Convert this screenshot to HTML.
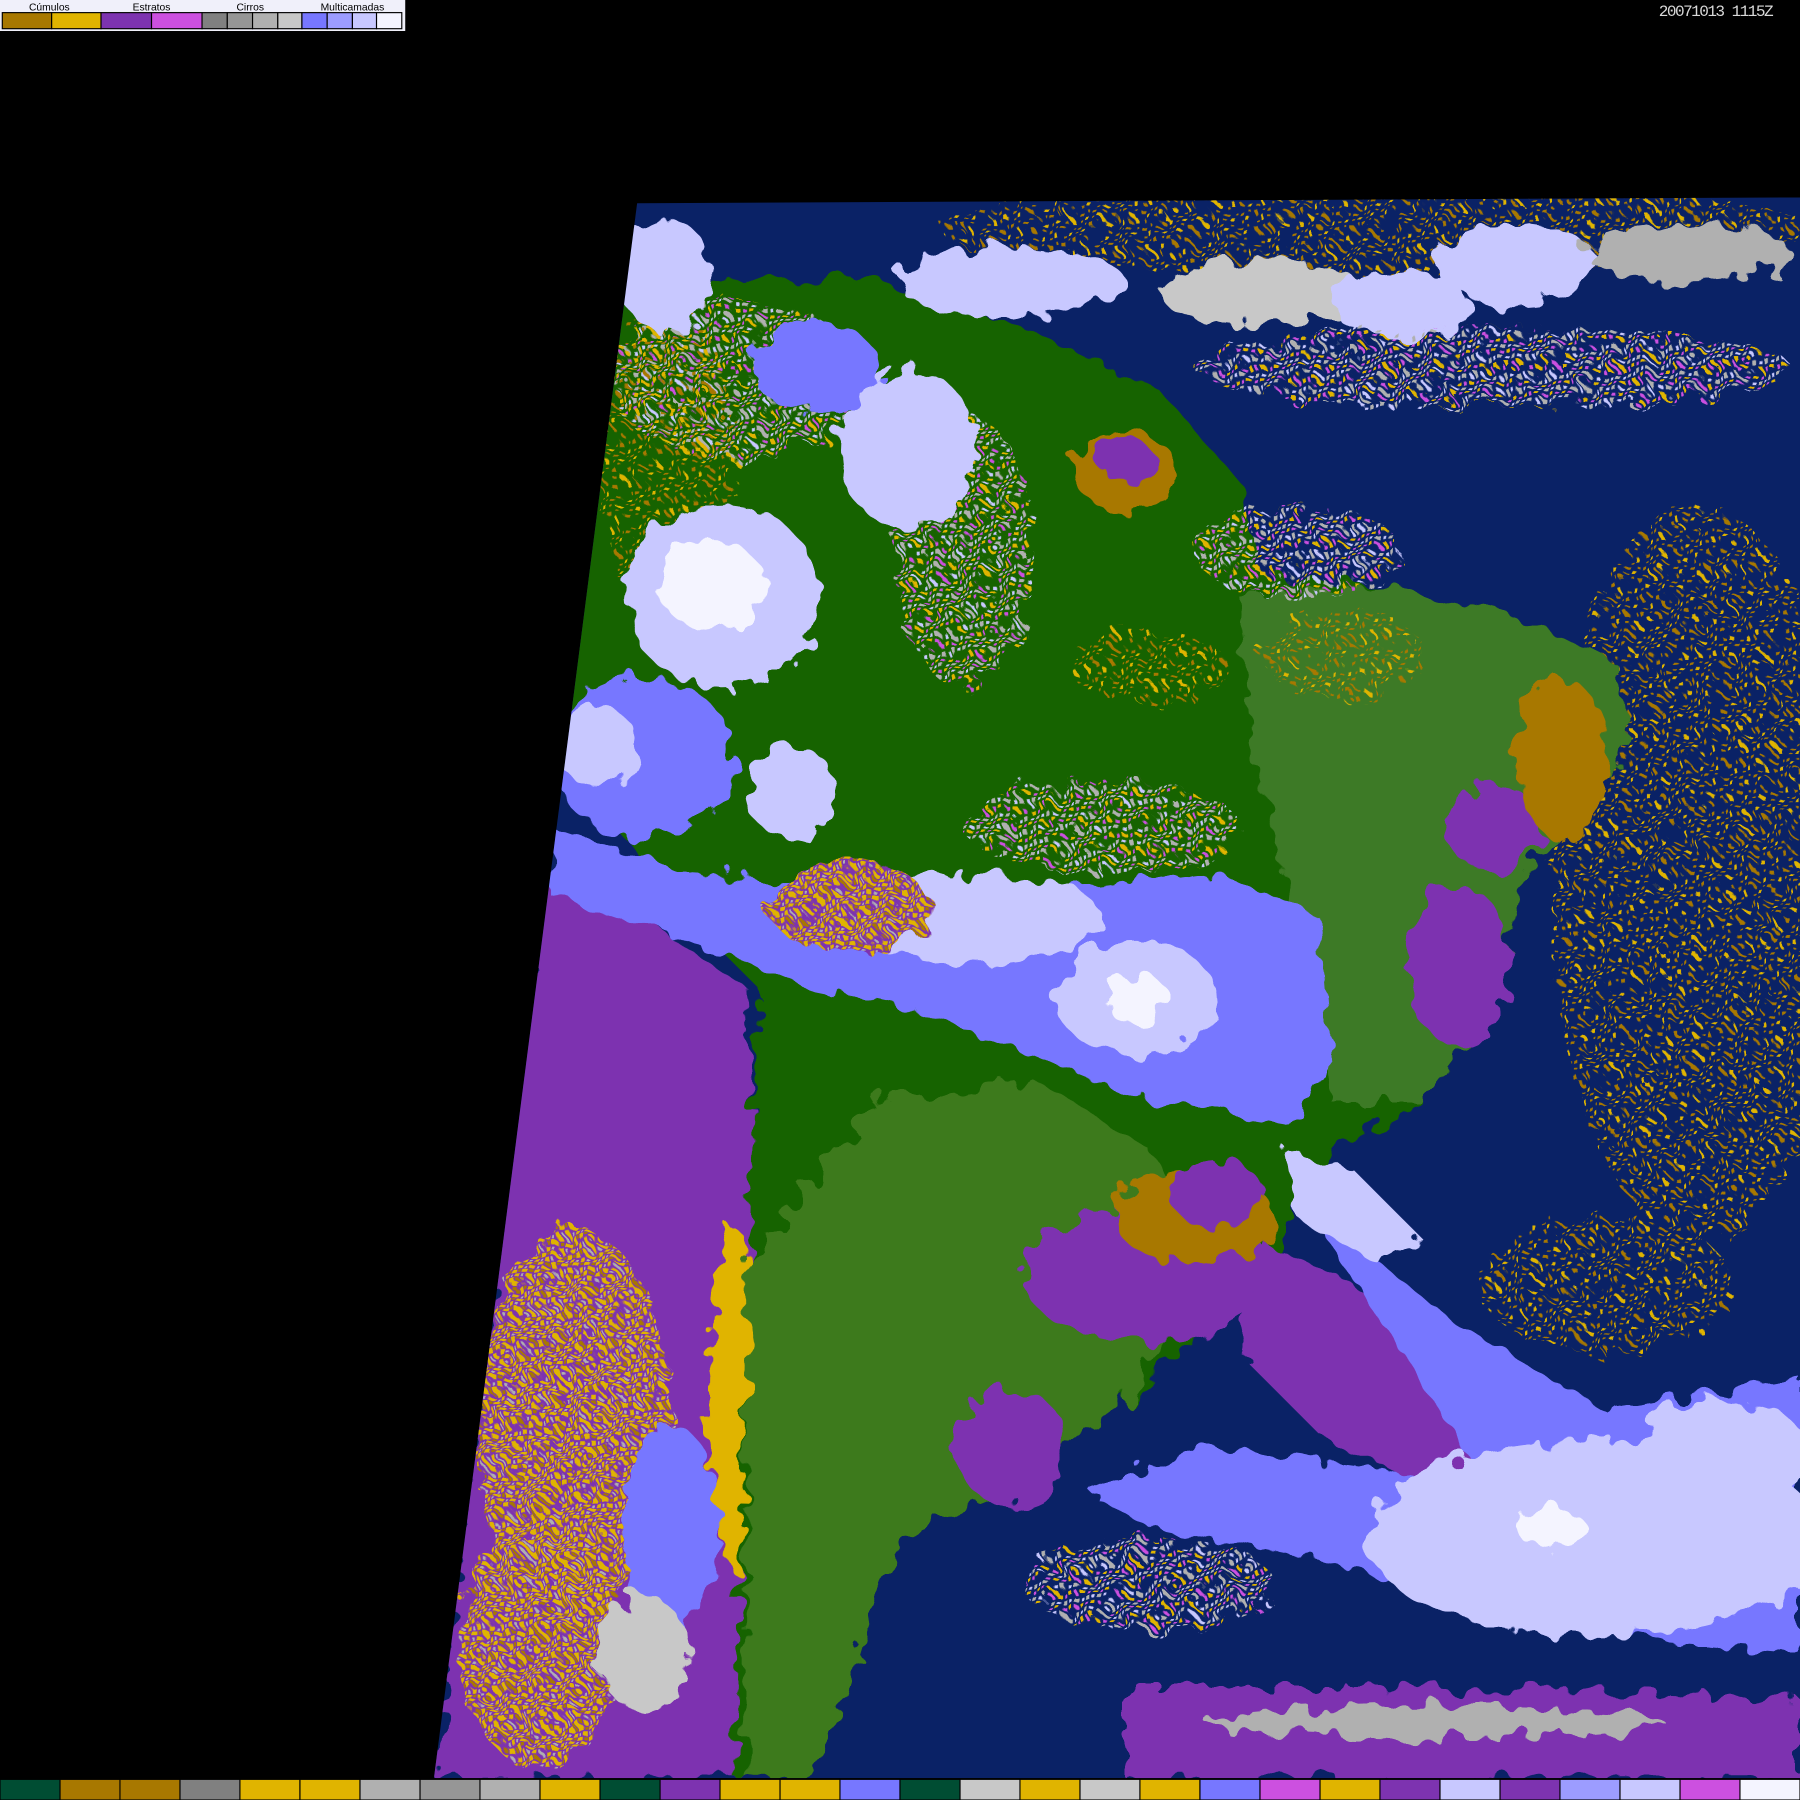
<!DOCTYPE html>
<html><head><meta charset="utf-8"><style>
html,body{margin:0;padding:0;background:#000;width:1800px;height:1800px;overflow:hidden}
svg{display:block}
</style></head><body>
<svg width="1800" height="1800" viewBox="0 0 1568 1568" xmlns="http://www.w3.org/2000/svg">
<defs>
<clipPath id="map"><polygon points="555,177 1568,172 1568,1549 378,1549"/></clipPath>
<filter id="rough" x="-10%" y="-10%" width="120%" height="120%">
<feTurbulence type="fractalNoise" baseFrequency="0.05" numOctaves="2" seed="3" result="n"/>
<feDisplacementMap in="SourceGraphic" in2="n" scale="30"/>
</filter>
<pattern id="spO" width="14" height="14" patternUnits="userSpaceOnUse">
<rect x="1" y="2" width="4" height="3" fill="#a87800"/><rect x="8" y="7" width="3" height="4" fill="#e0b400"/><rect x="10" y="1" width="2" height="2" fill="#a87800"/><rect x="3" y="10" width="3" height="2" fill="#a87800"/>
</pattern>
<pattern id="spY" width="10" height="10" patternUnits="userSpaceOnUse">
<rect x="0" y="0" width="5" height="4" fill="#e0b400"/><rect x="5" y="5" width="4" height="4" fill="#e0b400"/><rect x="6" y="0" width="3" height="3" fill="#a87800"/><rect x="1" y="6" width="2" height="3" fill="#b0b0b0"/>
</pattern>
<pattern id="spG" width="12" height="12" patternUnits="userSpaceOnUse">
<rect x="0" y="0" width="4" height="4" fill="#b0b0b0"/><rect x="6" y="6" width="4" height="3" fill="#e0b400"/><rect x="7" y="1" width="3" height="3" fill="#c8c8ff"/><rect x="1" y="7" width="3" height="3" fill="#cc50e0"/>
</pattern>
</defs>
<rect width="1568" height="1568" fill="#000"/>
<g clip-path="url(#map)">
<rect x="370" y="170" width="1200" height="1380" fill="#0a2266"/>
<g filter="url(#rough)">
<!-- ocean cumulus speckles -->
<ellipse cx="1480" cy="760" rx="130" ry="320" fill="url(#spO)"/>
<ellipse cx="1400" cy="1120" rx="110" ry="60" fill="url(#spO)"/>
<ellipse cx="1200" cy="200" rx="380" ry="40" fill="url(#spO)"/>
<!-- pacific purple -->
<polygon points="378,1549 470,760 560,800 650,860 665,1100 650,1549" fill="#7d33b0"/>
<ellipse cx="500" cy="1240" rx="85" ry="170" fill="url(#spY)"/>
<ellipse cx="470" cy="1430" rx="70" ry="110" fill="url(#spY)"/>
<ellipse cx="640" cy="1220" rx="22" ry="150" fill="#e0b400"/>
<ellipse cx="585" cy="1330" rx="40" ry="90" fill="#7777ff"/>
<ellipse cx="560" cy="1440" rx="40" ry="50" fill="#c8c8c8"/>
<!-- land -->
<polygon points="540,250 760,240 900,290 1010,340 1080,420 1100,500 1200,510 1330,540 1410,580 1420,650 1330,760 1300,880 1240,960 1160,1000 1120,1070 1060,1150 980,1220 900,1290 800,1330 760,1400 730,1500 700,1549 640,1549 650,1200 660,860 600,800 520,700 490,600 500,420" fill="#176300"/>
<polygon points="1080,520 1200,510 1330,540 1410,580 1420,650 1330,760 1300,880 1240,960 1160,960 1130,800 1090,650" fill="#3d7a26"/>
<polygon points="760,960 900,940 1000,1000 1060,1100 980,1220 900,1290 800,1330 760,1400 730,1500 700,1549 650,1549 650,1100" fill="#3e7a1e"/>
<!-- speckled clouds over land -->
<ellipse cx="640" cy="330" rx="110" ry="70" fill="url(#spG)"/>
<ellipse cx="840" cy="480" rx="60" ry="120" fill="url(#spG)"/>
<ellipse cx="580" cy="400" rx="60" ry="140" fill="url(#spO)"/>
<ellipse cx="960" cy="720" rx="120" ry="40" fill="url(#spG)"/>
<ellipse cx="1130" cy="480" rx="90" ry="40" fill="url(#spG)"/>
<!-- ochre/purple patches on land -->
<ellipse cx="980" cy="410" rx="45" ry="35" fill="#a87800"/>
<ellipse cx="980" cy="400" rx="25" ry="18" fill="#7d33b0"/>
<ellipse cx="1000" cy="580" rx="70" ry="30" fill="url(#spO)"/>
<ellipse cx="1170" cy="570" rx="70" ry="40" fill="url(#spO)"/>
<ellipse cx="1300" cy="720" rx="40" ry="40" fill="#7d33b0"/>
<ellipse cx="1270" cy="840" rx="45" ry="70" fill="#7d33b0"/>
<ellipse cx="1360" cy="660" rx="40" ry="70" fill="#a87800"/>
<ellipse cx="1000" cy="1110" rx="110" ry="60" fill="#7d33b0"/>
<ellipse cx="1040" cy="1060" rx="70" ry="40" fill="#a87800"/>
<ellipse cx="880" cy="1260" rx="50" ry="50" fill="#7d33b0"/>
<ellipse cx="1060" cy="1040" rx="40" ry="30" fill="#7d33b0"/>
<!-- atlantic purple band -->
<polygon points="1100,1080 1200,1130 1320,1200 1400,1260 1380,1320 1250,1300 1150,1250 1080,1180" fill="#7d33b0"/>
<!-- north cloud band -->
<ellipse cx="880" cy="245" rx="100" ry="30" fill="#c8c8ff"/>
<ellipse cx="1100" cy="255" rx="90" ry="28" fill="#c8c8c8"/>
<ellipse cx="1220" cy="265" rx="60" ry="30" fill="#c8c8ff"/>
<ellipse cx="1320" cy="230" rx="70" ry="35" fill="#c8c8ff"/>
<ellipse cx="1470" cy="220" rx="90" ry="25" fill="#b0b0b0"/>
<ellipse cx="1300" cy="320" rx="260" ry="35" fill="url(#spG)"/>
<ellipse cx="580" cy="240" rx="40" ry="50" fill="#c8c8ff"/>
<!-- amazon clouds -->
<ellipse cx="710" cy="320" rx="55" ry="40" fill="#7777ff"/>
<ellipse cx="790" cy="390" rx="60" ry="70" fill="#c8c8ff"/>
<ellipse cx="630" cy="520" rx="85" ry="80" fill="#c8c8ff"/>
<ellipse cx="620" cy="510" rx="45" ry="40" fill="#f4f4ff"/>
<ellipse cx="560" cy="660" rx="80" ry="70" fill="#7777ff"/>
<ellipse cx="520" cy="650" rx="35" ry="35" fill="#c8c8ff"/>
<ellipse cx="690" cy="690" rx="40" ry="40" fill="#c8c8ff"/>
<!-- big diagonal band -->
<polygon points="480,720 600,760 760,770 900,780 1060,760 1150,800 1160,920 1120,980 1000,960 900,920 800,880 700,860 600,820 480,780" fill="#7777ff"/>
<ellipse cx="850" cy="800" rx="110" ry="40" fill="#c8c8ff"/>
<ellipse cx="990" cy="870" rx="70" ry="50" fill="#c8c8ff"/>
<ellipse cx="990" cy="870" rx="28" ry="22" fill="#f4f4ff"/>
<ellipse cx="740" cy="790" rx="70" ry="40" fill="#7d33b0"/>
<ellipse cx="740" cy="790" rx="70" ry="40" fill="url(#spY)"/>
<!-- south atlantic storm -->
<polygon points="1130,1040 1250,1140 1400,1230 1568,1200 1568,1440 1450,1430 1300,1400 1150,1360 1000,1330 950,1300 1050,1260 1200,1280 1300,1300" fill="#7777ff"/>
<ellipse cx="1390" cy="1340" rx="200" ry="85" fill="#c8c8ff"/>
<ellipse cx="1500" cy="1270" rx="80" ry="50" fill="#c8c8ff"/>
<ellipse cx="1350" cy="1330" rx="30" ry="18" fill="#f4f4ff"/>
<polygon points="1120,1000 1180,1020 1240,1080 1200,1100 1130,1060" fill="#c8c8ff"/>
<ellipse cx="1000" cy="1380" rx="110" ry="40" fill="url(#spG)"/>
<!-- south purple strip -->
<polygon points="980,1470 1200,1470 1568,1480 1568,1549 980,1549" fill="#7d33b0"/>
<ellipse cx="1250" cy="1500" rx="200" ry="15" fill="#b0b0b0"/>
</g>
</g>
<!-- legend -->
<rect x="0" y="0" width="353" height="27" fill="#f0f0fa"/>
<g font-family="Liberation Sans, sans-serif" font-size="9" fill="#000" text-anchor="middle">
<text x="43" y="9">Cúmulos</text><text x="132" y="9">Estratos</text><text x="218" y="9">Cirros</text><text x="307" y="9">Multicamadas</text>
</g>
<g stroke="#000" stroke-width="1">
<rect x="2" y="11" width="43" height="14" fill="#a87800"/>
<rect x="45" y="11" width="43" height="14" fill="#e0b400"/>
<rect x="88" y="11" width="44" height="14" fill="#7d33b0"/>
<rect x="132" y="11" width="44" height="14" fill="#cc50e0"/>
<rect x="176" y="11" width="22" height="14" fill="#808080"/>
<rect x="198" y="11" width="22" height="14" fill="#969696"/>
<rect x="220" y="11" width="22" height="14" fill="#b0b0b0"/>
<rect x="242" y="11" width="21" height="14" fill="#c8c8c8"/>
<rect x="263" y="11" width="22" height="14" fill="#7777ff"/>
<rect x="285" y="11" width="22" height="14" fill="#9c9cff"/>
<rect x="307" y="11" width="21" height="14" fill="#c8c8ff"/>
<rect x="328" y="11" width="22" height="14" fill="#f4f4ff"/>
</g>
<text x="1545" y="14" font-family="Liberation Mono, monospace" font-size="14" fill="#d8d8d8" text-anchor="end" textLength="100">20071013 1115Z</text>
<!-- bottom bar -->
<rect x="0" y="1549" width="1568" height="19" fill="#000"/>
<g stroke="#000" stroke-width="1">
<rect x="0" y="1550" width="52.3" height="18" fill="#004d33"/>
<rect x="52.3" y="1550" width="52.3" height="18" fill="#a87800"/>
<rect x="104.5" y="1550" width="52.3" height="18" fill="#a87800"/>
<rect x="156.8" y="1550" width="52.3" height="18" fill="#808080"/>
<rect x="209" y="1550" width="52.3" height="18" fill="#e0b400"/>
<rect x="261.3" y="1550" width="52.3" height="18" fill="#e0b400"/>
<rect x="313.6" y="1550" width="52.3" height="18" fill="#b0b0b0"/>
<rect x="365.9" y="1550" width="52.3" height="18" fill="#969696"/>
<rect x="418.1" y="1550" width="52.3" height="18" fill="#b0b0b0"/>
<rect x="470.4" y="1550" width="52.3" height="18" fill="#e0b400"/>
<rect x="522.7" y="1550" width="52.3" height="18" fill="#004d33"/>
<rect x="575" y="1550" width="52.3" height="18" fill="#7d33b0"/>
<rect x="627.2" y="1550" width="52.3" height="18" fill="#e0b400"/>
<rect x="679.5" y="1550" width="52.3" height="18" fill="#e0b400"/>
<rect x="731.7" y="1550" width="52.3" height="18" fill="#7777ff"/>
<rect x="784" y="1550" width="52.3" height="18" fill="#004d33"/>
<rect x="836.3" y="1550" width="52.3" height="18" fill="#c8c8c8"/>
<rect x="888.5" y="1550" width="52.3" height="18" fill="#e0b400"/>
<rect x="940.8" y="1550" width="52.3" height="18" fill="#c8c8c8"/>
<rect x="993" y="1550" width="52.3" height="18" fill="#e0b400"/>
<rect x="1045.3" y="1550" width="52.3" height="18" fill="#7777ff"/>
<rect x="1097.6" y="1550" width="52.3" height="18" fill="#cc50e0"/>
<rect x="1149.9" y="1550" width="52.3" height="18" fill="#e0b400"/>
<rect x="1202.1" y="1550" width="52.3" height="18" fill="#7d33b0"/>
<rect x="1254.4" y="1550" width="52.3" height="18" fill="#c8c8ff"/>
<rect x="1306.7" y="1550" width="52.3" height="18" fill="#7d33b0"/>
<rect x="1358.9" y="1550" width="52.3" height="18" fill="#9c9cff"/>
<rect x="1411.2" y="1550" width="52.3" height="18" fill="#c8c8ff"/>
<rect x="1463.5" y="1550" width="52.3" height="18" fill="#cc50e0"/>
<rect x="1515.7" y="1550" width="52.3" height="18" fill="#f4f4ff"/>
</g>
</svg>
</body></html>
